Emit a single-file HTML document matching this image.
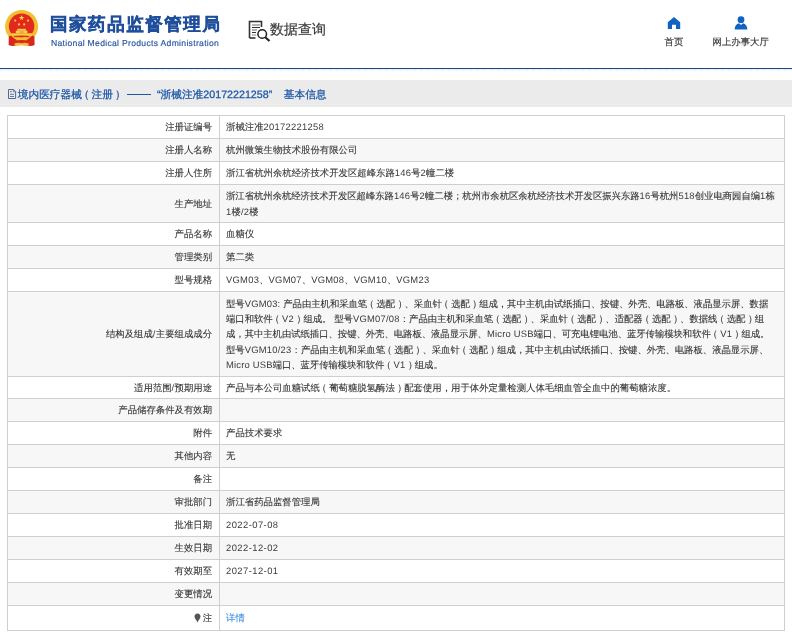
<!DOCTYPE html>
<html><head><meta charset="utf-8">
<style>
*{margin:0;padding:0;box-sizing:border-box}
html,body{width:792px;height:636px;overflow:hidden;background:#fff}
#wrap{position:absolute;left:0;top:0;width:792px;height:636px;will-change:transform}
body{font-family:"Liberation Sans",sans-serif;color:#333;position:relative;text-rendering:geometricPrecision}
.a{position:absolute;white-space:nowrap}
.t{position:absolute;white-space:nowrap;line-height:1}
.hl{position:absolute;left:7px;width:778px;height:1px;background:#cfcfcf}
.row{position:absolute;left:8px;width:776px}
.g{background:#f7f7f7}
.lab{position:absolute;right:580px;font-size:9.4px;color:#333;-webkit-text-stroke-width:0.1px;white-space:nowrap;line-height:9.4px}
.val{position:absolute;left:226px;font-size:9.4px;color:#333;-webkit-text-stroke-width:0.1px;white-space:nowrap;line-height:9.4px}
.val,.lab{--e:0px;letter-spacing:var(--e)}
.pl{position:relative;left:-2.5px}
.pr{position:relative;left:2.5px}
.l{letter-spacing:calc(0.28px + var(--e));-webkit-text-stroke-width:0;color:#3a3a3a}
</style></head><body><div id="wrap">

<!-- emblem -->
<svg class="a" style="left:0;top:0" width="46" height="50" viewBox="0 0 46 50">
  <circle cx="21.6" cy="26.5" r="16.5" fill="#f0c030"/>
  <circle cx="21.6" cy="26.3" r="12.7" fill="#e3291d"/>
  <path d="M10.5 33.2 H32.7 L31.5 36 Q21.6 34.8 11.7 36 Z" fill="#f5cc3c"/>
  <rect x="15.8" y="30.6" width="11.6" height="2.7" fill="#f6d04a"/>
  <rect x="17.3" y="28.8" width="8.6" height="1.9" fill="#f6d04a"/>
  <rect x="19.5" y="31.2" width="4.2" height="2" fill="#e9a93a"/>
  <path d="M8.8 36.5 L11 35.6 Q14 38.5 16.5 40 L16 45.6 Q12 46.5 8.6 45 Z" fill="#d9261c"/>
  <path d="M34.4 36.5 L32.2 35.6 Q29.2 38.5 26.7 40 L27.2 45.6 Q31.2 46.5 34.6 45 Z" fill="#d9261c"/>
  <path d="M13 41 Q21.6 39 30.2 41 L30 45.8 Q21.6 44.3 13.2 45.8 Z" fill="#dc2a1e"/>
  <path d="M14.5 37.8 Q18 36.2 21.6 37.6 Q25.2 36.2 28.7 37.8 Q25.5 40 21.6 39.4 Q17.7 40 14.5 37.8 Z" fill="#f2c234"/>
  <path d="M14.5 43.6 Q18 42.2 21.6 43.2 Q25.2 42.2 28.7 43.6 L28.5 45.8 Q21.6 44.8 14.7 45.8 Z" fill="#f2c234"/>
  <polygon points="21.6,14.9 22.3,16.9 24.4,16.9 22.7,18.2 23.3,20.2 21.6,19 19.9,20.2 20.5,18.2 18.8,16.9 20.9,16.9" fill="#f7d34a"/>
  <circle cx="15.2" cy="20.6" r="1.1" fill="#f5cd44"/>
  <circle cx="28" cy="20.6" r="1.1" fill="#f5cd44"/>
  <circle cx="19" cy="24.4" r="1.1" fill="#f5cd44"/>
  <circle cx="24.2" cy="24.4" r="1.1" fill="#f5cd44"/>
</svg>

<div class="t" style="left:50px;top:16px;font-size:17.5px;font-weight:bold;letter-spacing:1.55px;color:#1f4e9c;-webkit-text-stroke:0.4px #1f4e9c">国家药品监督管理局</div>
<div class="t" style="left:51px;top:39px;font-size:8.6px;letter-spacing:0.3px;color:#2553a0;-webkit-text-stroke:0.15px #2553a0">National Medical Products Administration</div>

<!-- data query icon -->
<svg class="a" style="left:247px;top:19px" width="26" height="24" viewBox="0 0 26 24">
  <path d="M2.5 19 V2.5 H14.5 V8" fill="none" stroke="#333" stroke-width="1.6"/>
  <path d="M2.5 19 H8.5" fill="none" stroke="#333" stroke-width="1.6"/>
  <rect x="5" y="5.5" width="8" height="1" fill="#666"/>
  <rect x="5" y="8" width="8" height="1" fill="#333"/>
  <rect x="5" y="10.5" width="5" height="1" fill="#666"/>
  <rect x="5" y="13" width="4" height="1" fill="#333"/>
  <rect x="5" y="15.5" width="4" height="1" fill="#888"/>
  <circle cx="15.2" cy="15" r="4.3" fill="none" stroke="#222" stroke-width="1.5"/>
  <path d="M18.3 18.2 L22.5 22" stroke="#222" stroke-width="2.2"/>
</svg>
<div class="t" style="left:270px;top:22px;font-size:14px;color:#3a3a3a;-webkit-text-stroke:0.2px #3a3a3a">数据查询</div>

<!-- home -->
<svg class="a" style="left:667px;top:16px" width="14" height="14" viewBox="0 0 14 14">
  <path d="M7 1 L13.2 6.2 V13 H9 V8.8 H5 V13 H0.8 V6.2 Z" fill="#1262c4"/>
</svg>
<div class="t" style="left:664.6px;top:36.7px;font-size:9.4px;color:#333;-webkit-text-stroke:0.15px #333">首页</div>

<!-- person -->
<svg class="a" style="left:733px;top:15px" width="16" height="16" viewBox="0 0 16 16">
  <circle cx="8" cy="4.7" r="3.4" fill="#1262c4"/>
  <path d="M1.6 14.5 Q2 9 6 8.3 L8 10 L10 8.3 Q14 9 14.4 14.5 Z" fill="#1262c4"/>
</svg>
<div class="t" style="left:712.6px;top:36.7px;font-size:9.4px;color:#333;-webkit-text-stroke:0.15px #333">网上办事大厅</div>

<!-- blue line -->
<div class="a" style="left:0;top:68px;width:792px;height:1px;background:#22497c"></div>
<div class="a" style="left:0;top:69px;width:792px;height:1px;background:#e2f0fa"></div>
<div class="a" style="left:0;top:70px;width:792px;height:1px;background:repeating-linear-gradient(90deg,#eef2f6 0 3px,#fff 3px 7px)"></div>

<!-- title bar -->
<div class="a" style="left:0;top:80px;width:792px;height:27px;background:#ebebeb"></div>
<svg class="a" style="left:8px;top:89px" width="9" height="10" viewBox="0 0 9 10">
  <path d="M0.5 0.5 H5.6 L7.6 2.5 V9.5 H0.5 Z" fill="none" stroke="#4a6290" stroke-width="0.95"/>
  <path d="M5.4 0.6 V2.7 H7.5" fill="none" stroke="#4a6290" stroke-width="0.7"/>
  <path d="M2 2.7 H4 M2 5.3 H6 M2 7.5 H6" stroke="#4a6290" stroke-width="0.85"/>
</svg>
<div class="t" style="left:17.8px;top:89.6px;font-size:10.7px;color:#1a55a6;-webkit-text-stroke:0.25px #1a55a6">境内医疗器械</div>
<div class="t" style="left:78.8px;top:89.6px;font-size:10.7px;color:#1a55a6;-webkit-text-stroke:0.25px #1a55a6">（</div>
<div class="t" style="left:91.5px;top:89.6px;font-size:10.7px;color:#1a55a6;-webkit-text-stroke:0.25px #1a55a6">注册</div>
<div class="t" style="left:115px;top:89.6px;font-size:10.7px;color:#1a55a6;-webkit-text-stroke:0.25px #1a55a6">）</div>
<div class="a" style="left:127px;top:94px;width:24px;height:1.2px;background:#1a55a6"></div>
<div class="t" style="left:157px;top:89.6px;font-size:10.7px;color:#1a55a6;-webkit-text-stroke:0.25px #1a55a6">“浙械注准20172221258”</div>
<div class="t" style="left:283.8px;top:89.6px;font-size:10.7px;color:#1a55a6;-webkit-text-stroke:0.25px #1a55a6">基本信息</div>

<!-- TABLE -->
<div class="a" style="left:8px;top:139px;width:776px;height:22px;background:#f7f7f7"></div>
<div class="a" style="left:8px;top:185px;width:776px;height:37px;background:#f7f7f7"></div>
<div class="a" style="left:8px;top:246px;width:776px;height:22px;background:#f7f7f7"></div>
<div class="a" style="left:8px;top:292px;width:776px;height:84px;background:#f7f7f7"></div>
<div class="a" style="left:8px;top:399px;width:776px;height:22px;background:#f7f7f7"></div>
<div class="a" style="left:8px;top:445px;width:776px;height:22px;background:#f7f7f7"></div>
<div class="a" style="left:8px;top:491px;width:776px;height:22px;background:#f7f7f7"></div>
<div class="a" style="left:8px;top:537px;width:776px;height:22px;background:#f7f7f7"></div>
<div class="a" style="left:8px;top:583px;width:776px;height:22px;background:#f7f7f7"></div>
<div class="hl" style="top:115px"></div>
<div class="lab" style="top:122.10px">注册证编号</div>
<div class="val" style="top:122.10px">浙械注准<span class="l">20172221258</span></div>
<div class="hl" style="top:138px"></div>
<div class="lab" style="top:145.10px">注册人名称</div>
<div class="val" style="top:145.10px">杭州微策生物技术股份有限公司</div>
<div class="hl" style="top:161px"></div>
<div class="lab" style="top:168.10px">注册人住所</div>
<div class="val" style="top:168.10px">浙江省杭州余杭经济技术开发区超峰东路<span class="l">146</span>号<span class="l">2</span>幢二楼</div>
<div class="hl" style="top:184px"></div>
<div class="lab" style="top:198.60px">生产地址</div>
<div class="val" style="top:190.50px;--e:-0.048px">浙江省杭州余杭经济技术开发区超峰东路<span class="l">146</span>号<span class="l">2</span>幢二楼；杭州市余杭区余杭经济技术开发区振兴东路<span class="l">16</span>号杭州<span class="l">518</span>创业电商园自编<span class="l">1</span>栋</div>
<div class="val" style="top:206.80px"><span class="l">1</span>楼<span class="l">/2</span>楼</div>
<div class="hl" style="top:222px"></div>
<div class="lab" style="top:229.10px">产品名称</div>
<div class="val" style="top:229.10px">血糖仪</div>
<div class="hl" style="top:245px"></div>
<div class="lab" style="top:252.10px">管理类别</div>
<div class="val" style="top:252.10px">第二类</div>
<div class="hl" style="top:268px"></div>
<div class="lab" style="top:275.10px">型号规格</div>
<div class="val" style="top:275.10px"><span class="l">VGM03</span>、<span class="l">VGM07</span>、<span class="l">VGM08</span>、<span class="l">VGM10</span>、<span class="l">VGM23</span></div>
<div class="hl" style="top:291px"></div>
<div class="lab" style="top:329.10px">结构及组成<span class="l">/</span>主要组成成分</div>
<div class="val" style="top:299.30px;--e:-0.050px">型号<span class="l">VGM03: </span>产品由主机和采血笔<span class="pl">（</span>选配<span class="pr">）</span>、采血针<span class="pl">（</span>选配<span class="pr">）</span>组成，其中主机由试纸插口、按键、外壳、电路板、液晶显示屏、数据</div>
<div class="val" style="top:314.00px;--e:-0.033px">端口和软件<span class="pl">（</span><span class="l">V2</span><span class="pr">）</span>组成。<span class="l"> </span>型号<span class="l">VGM07/08</span>：产品由主机和采血笔<span class="pl">（</span>选配<span class="pr">）</span>、采血针<span class="pl">（</span>选配<span class="pr">）</span>、适配器<span class="pl">（</span>选配<span class="pr">）</span>、数据线<span class="pl">（</span>选配<span class="pr">）</span>组</div>
<div class="val" style="top:328.50px;--e:-0.056px">成，其中主机由试纸插口、按键、外壳、电路板、液晶显示屏、<span class="l">Micro USB</span>端口、可充电锂电池、蓝牙传输模块和软件<span class="pl">（</span><span class="l">V1</span><span class="pr">）</span>组成。</div>
<div class="val" style="top:345.30px;--e:-0.030px">型号<span class="l">VGM10/23</span>：产品由主机和采血笔<span class="pl">（</span>选配<span class="pr">）</span>、采血针<span class="pl">（</span>选配<span class="pr">）</span>组成，其中主机由试纸插口、按键、外壳、电路板、液晶显示屏、</div>
<div class="val" style="top:359.90px;--e:-0.074px"><span class="l">Micro USB</span>端口、蓝牙传输模块和软件<span class="pl">（</span><span class="l">V1</span><span class="pr">）</span>组成。</div>
<div class="hl" style="top:376px"></div>
<div class="lab" style="top:382.60px">适用范围<span class="l">/</span>预期用途</div>
<div class="val" style="top:382.60px">产品与本公司血糖试纸<span class="pl">（</span>葡萄糖脱氢酶法<span class="pr">）</span>配套使用，用于体外定量检测人体毛细血管全血中的葡萄糖浓度。</div>
<div class="hl" style="top:398px"></div>
<div class="lab" style="top:405.10px">产品储存条件及有效期</div>
<div class="hl" style="top:421px"></div>
<div class="lab" style="top:428.10px">附件</div>
<div class="val" style="top:428.10px">产品技术要求</div>
<div class="hl" style="top:444px"></div>
<div class="lab" style="top:451.10px">其他内容</div>
<div class="val" style="top:451.10px">无</div>
<div class="hl" style="top:467px"></div>
<div class="lab" style="top:474.10px">备注</div>
<div class="hl" style="top:490px"></div>
<div class="lab" style="top:497.10px">审批部门</div>
<div class="val" style="top:497.10px">浙江省药品监督管理局</div>
<div class="hl" style="top:513px"></div>
<div class="lab" style="top:520.10px">批准日期</div>
<div class="val" style="top:520.10px;--e:0.178px"><span class="l">2022-07-08</span></div>
<div class="hl" style="top:536px"></div>
<div class="lab" style="top:543.10px">生效日期</div>
<div class="val" style="top:543.10px;--e:0.178px"><span class="l">2022-12-02</span></div>
<div class="hl" style="top:559px"></div>
<div class="lab" style="top:566.10px">有效期至</div>
<div class="val" style="top:566.10px;--e:0.178px"><span class="l">2027-12-01</span></div>
<div class="hl" style="top:582px"></div>
<div class="lab" style="top:589.10px">变更情况</div>
<div class="hl" style="top:605px"></div>
<svg class="a" style="left:194px;top:613.2px" width="7" height="10" viewBox="0 0 7 10"><path d="M3.5 0.5 C1.5 0.5 0.5 2 0.5 3.6 C0.5 5.5 2.3 6.8 3.5 9.5 C4.7 6.8 6.5 5.5 6.5 3.6 C6.5 2 5.5 0.5 3.5 0.5 Z" fill="#555"/></svg>
<div class="lab" style="top:613.10px">注</div>
<div class="val" style="top:613.10px;color:#3d8fe0">详情</div>
<div class="hl" style="top:630px"></div>
<div class="a" style="left:7px;top:115px;width:1px;height:516px;background:#cfcfcf"></div>
<div class="a" style="left:784px;top:115px;width:1px;height:516px;background:#cfcfcf"></div>
<div class="a" style="left:219px;top:115px;width:1px;height:516px;background:#cfcfcf"></div>
</div></body></html>
